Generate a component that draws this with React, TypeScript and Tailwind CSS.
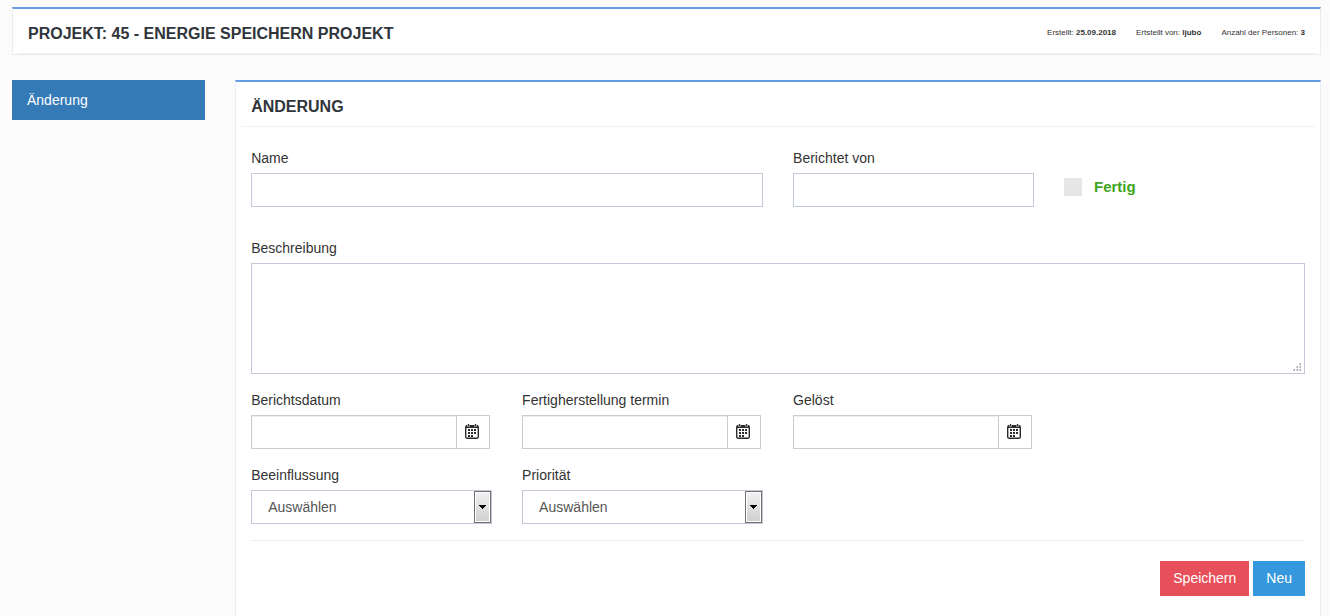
import React, { useState } from 'react';
import clsx from 'clsx';

interface PanelTitleProps {
  title: string;
  children?: React.ReactNode;
}

interface FieldProps {
  id: string;
  label: string;
  className?: string;
  children: React.ReactNode;
}

const META = [
  { label: 'Erstellt:', value: '25.09.2018' },
  { label: 'Ertstellt von:', value: 'ljubo' },
  { label: 'Anzahl der Personen:', value: '3' },
];

const CalendarIcon: React.FC = () => (
  <svg width="14" height="15" viewBox="0 0 14 15" fill="none" aria-hidden="true">
    <rect x="0.7" y="1.7" width="12.6" height="12.6" rx="1.6" stroke="#2b2b2b" strokeWidth="1.4" />
    <path d="M1 1.2h12V4H1z" fill="#2b2b2b" />
    <path d="M3.5 1v1.4M10.5 1v1.4" stroke="#fff" strokeWidth="2.4" />
    <path d="M3.5 0v2M10.5 0v2" stroke="#2b2b2b" strokeWidth="1.4" />
    <path
      d="M6 5h2v2H6zM9 5h2v2H9zM3 8h2v2H3zM6 8h2v2H6zM9 8h2v2H9zM3 11h2v2H3zM6 11h2v2H6zM3 5h2v2H3z"
      fill="#2b2b2b"
    />
  </svg>
);

const PanelTitle: React.FC<PanelTitleProps> = ({ title, children }) => (
  <div className="mx-[5px] flex min-h-[45px] items-center justify-between border-b border-[#eef1f5] px-[10px] pt-1">
    <h2 className="pt-[2px] text-[16px] leading-5 font-bold text-[#2f353b] uppercase">{title}</h2>
    {children}
  </div>
);

const Field: React.FC<FieldProps> = ({ id, label, className, children }) => (
  <div className={clsx('flex flex-col gap-[5px]', className)}>
    <label htmlFor={id} className="leading-5">
      {label}
    </label>
    {children}
  </div>
);

const TextInput: React.FC<{ id: string }> = ({ id }) => (
  <input id={id} type="text" className="h-[34px] w-full border border-[#c2cad8] bg-white px-3 outline-none" />
);

const DateInput: React.FC<{ id: string }> = ({ id }) => (
  <div className="mr-[2px] flex h-[34px]">
    <input
      id={id}
      type="text"
      className="min-w-0 flex-1 border border-[#ccc] bg-white px-3 inset-shadow-[0_1px_1px_#00000013] outline-none"
    />
    <button
      type="button"
      aria-label="Kalender"
      className="flex w-[33px] items-center justify-center border border-l-0 border-[#ccc] bg-white pr-[2px] pb-px"
    >
      <CalendarIcon />
    </button>
  </div>
);

const SelectInput: React.FC<{ id: string }> = ({ id }) => (
  <div className="relative">
    <select
      id={id}
      className="h-[34px] w-full appearance-none border border-[#c2cad8] bg-white pr-6 pl-4 text-[#555] outline-none"
    >
      <option>Auswählen</option>
    </select>
    <span className="pointer-events-none absolute inset-y-px right-px flex w-[17px] items-center justify-center border border-[#707070] bg-linear-to-b from-[#f2f2f2] to-[#cfcfcf] inset-ring inset-ring-white">
      <svg width="7" height="4" viewBox="0 0 7 4" aria-hidden="true">
        <path d="M0 0h7v1H6v1H5v1H4v1H3V3H2V2H1V1H0z" fill="#000" />
      </svg>
    </span>
  </div>
);

const App: React.FC = () => {
  const [done, setDone] = useState(false);

  return (
    <div className="min-h-screen bg-[#fbfbfb] pt-[7px] pr-[9px] pl-3 font-['Liberation_Sans',Arial,sans-serif] text-[14px] text-[#333]">
      {/* Project header */}
      <header className="border border-t-2 border-[#e7ecf1] border-t-[#659be0] bg-white">
        <PanelTitle title="Projekt: 45 - Energie speichern Projekt">
          <ul className="flex gap-5 text-[8px] leading-3 text-[#333]">
            {META.map((item) => (
              <li key={item.label}>
                {item.label} <b>{item.value}</b>
              </li>
            ))}
          </ul>
        </PanelTitle>
      </header>

      <div className="mt-[25px] grid grid-cols-12 gap-x-[30px]">
        {/* Sidebar */}
        <nav className="col-span-2">
          <a href="#aenderung" className="block bg-[#337ab7] px-[15px] py-[10px] leading-5 text-white">
            Änderung
          </a>
        </nav>

        {/* Form */}
        <main id="aenderung" className="col-span-10 border-x border-t-2 border-[#e7ecf1] border-t-[#659be0] bg-white">
          <PanelTitle title="Änderung" />
          <form className="px-[15px] pt-[21px] pb-5" onSubmit={(e) => e.preventDefault()}>
            <div className="grid grid-cols-4 gap-x-[30px] gap-y-4">
              <Field id="name" label="Name" className="col-span-2">
                <TextInput id="name" />
              </Field>
              <Field id="reporter" label="Berichtet von">
                <TextInput id="reporter" />
              </Field>
              <label className="flex items-center gap-3 pt-[19px] text-[15px] font-bold text-[#3ea51d]">
                <input
                  type="checkbox"
                  checked={done}
                  onChange={(e) => setDone(e.target.checked)}
                  className="size-[18px] appearance-none bg-[#e6e6e6] checked:bg-[#3ea51d]"
                />
                Fertig
              </label>

              <Field id="description" label="Beschreibung" className="col-span-4 mt-[15px]">
                <div className="relative flex">
                  <textarea
                    id="description"
                    className="h-[111px] w-full resize-none border border-[#c2cad8] bg-white px-3 py-[6px] outline-none"
                  />
                  <svg
                    className="pointer-events-none absolute right-[3px] bottom-[2px]"
                    width="9"
                    height="9"
                    viewBox="0 0 9 9"
                    aria-hidden="true"
                  >
                    <path d="M6 0h2v2H6zM3 3h2v2H3zM6 3h2v2H6zM0 6h2v2H0zM3 6h2v2H3zM6 6h2v2H6z" fill="#d6d6d6" />
                    <path d="M7 0h1v2H7zM4 3h1v2H4zM7 3h1v2H7zM1 6h1v2H1zM4 6h1v2H4zM7 6h1v2H7z" fill="#a8a8a8" />
                  </svg>
                </div>
              </Field>

              <Field id="reportDate" label="Berichtsdatum">
                <DateInput id="reportDate" />
              </Field>
              <Field id="dueDate" label="Fertigherstellung termin">
                <DateInput id="dueDate" />
              </Field>
              <Field id="solvedDate" label="Gelöst">
                <DateInput id="solvedDate" />
              </Field>

              <Field id="impact" label="Beeinflussung" className="col-start-1">
                <SelectInput id="impact" />
              </Field>
              <Field id="priority" label="Priorität">
                <SelectInput id="priority" />
              </Field>
            </div>

            {/* Actions */}
            <div className="mt-4 flex justify-end gap-1 border-t border-[#e7ecf1] pt-5 leading-5 text-white">
              <button type="submit" className="bg-[#e7505a] px-[13px] pt-[7px] pb-2">
                Speichern
              </button>
              <button type="reset" className="bg-[#3598dc] px-[13px] pt-[7px] pb-2">
                Neu
              </button>
            </div>
          </form>
        </main>
      </div>
    </div>
  );
};

export default App;
